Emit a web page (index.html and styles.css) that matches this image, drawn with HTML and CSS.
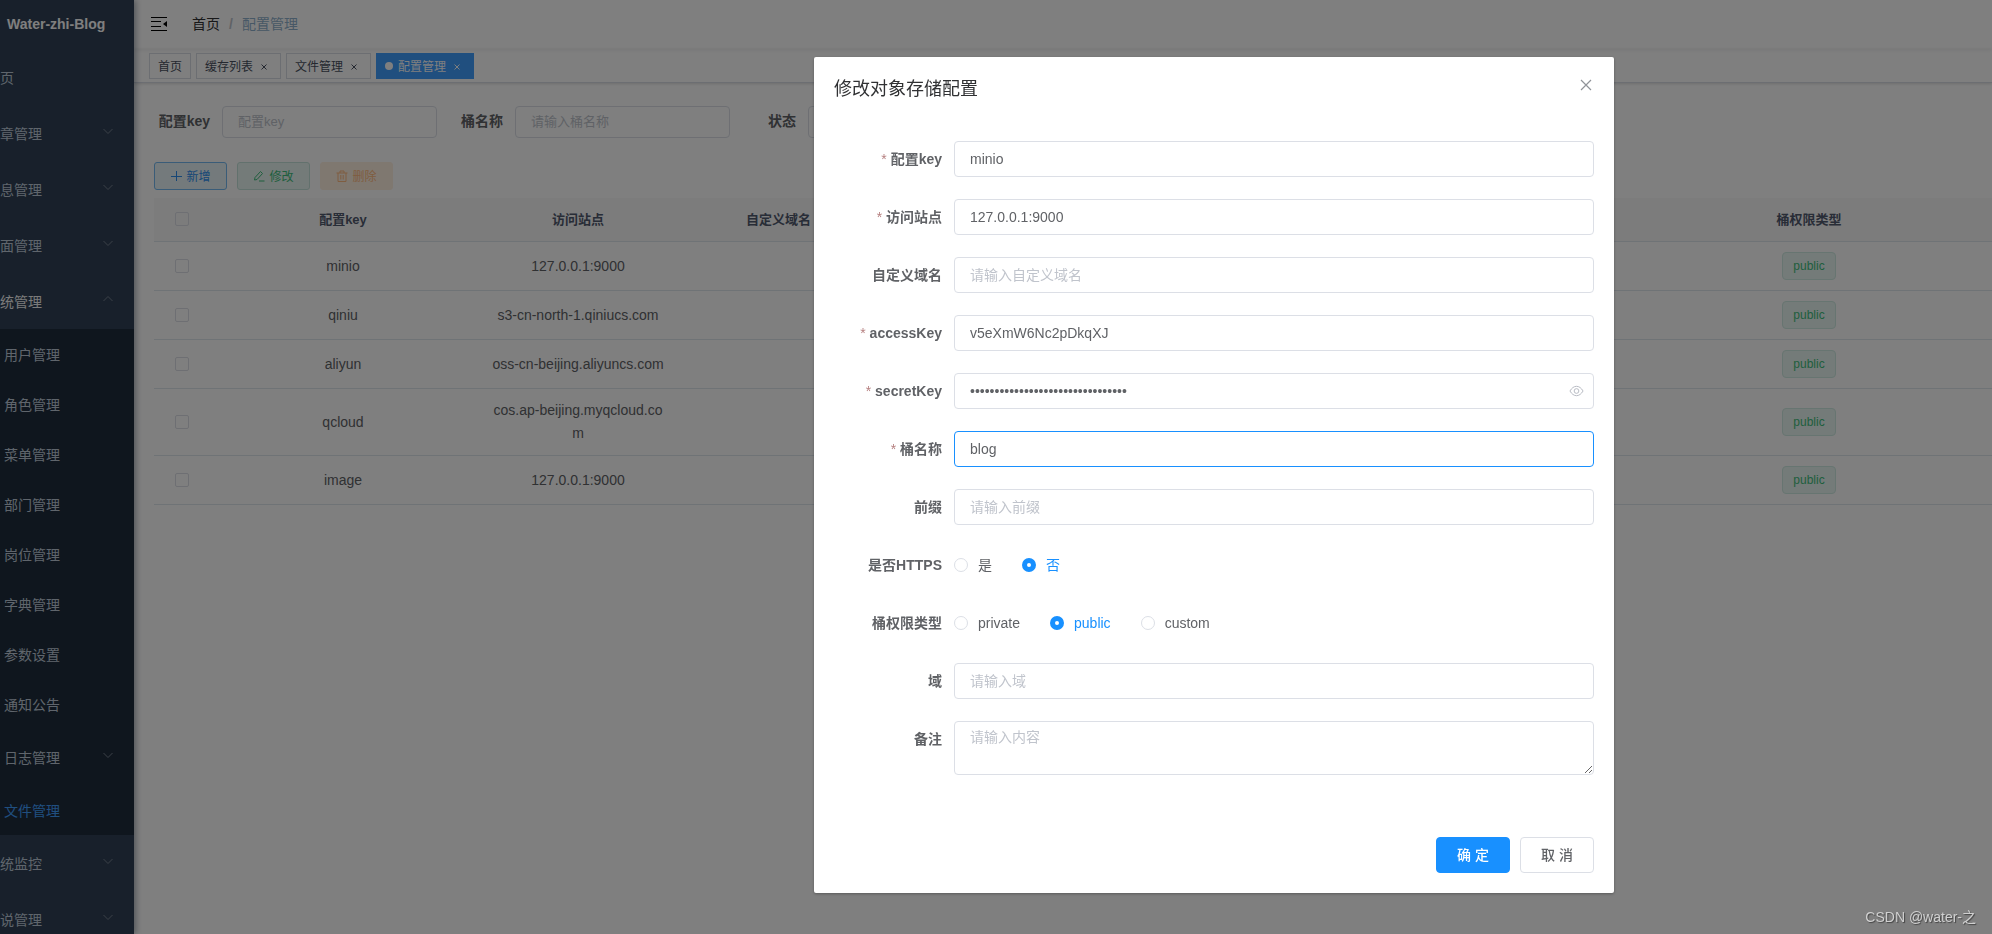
FILE: index.html
```html
<!DOCTYPE html>
<html lang="zh-CN">
<head>
<meta charset="utf-8">
<title>配置管理</title>
<link rel="stylesheet" href="styles.css">
</head>
<body>
<svg class="defs" aria-hidden="true">
  <symbol id="arrow" viewBox="0 0 12 12"><path d="M1.500 4L6 8.500 10.500 4" fill="none" stroke="currentColor"/></symbol>
  <symbol id="close" viewBox="0 0 12 12"><path d="M1 1l10 10M11 1L1 11" fill="none" stroke="currentColor" stroke-width="1.2"/></symbol>
  <symbol id="cross" viewBox="0 0 6 6"><path d="M.5.5l5 5M5.500.5l-5 5" fill="none" stroke="currentColor"/></symbol>
</svg>
<div class="app">
  <aside class="sidebar">
    <h1 class="logo">Water-zhi-Blog</h1>
    <ul class="menu">
      <li class="item">页</li>
      <li class="item">章管理<svg class="chev"><use href="#arrow"/></svg></li>
      <li class="item">息管理<svg class="chev"><use href="#arrow"/></svg></li>
      <li class="item">面管理<svg class="chev"><use href="#arrow"/></svg></li>
      <li class="item open">统管理<svg class="chev up"><use href="#arrow"/></svg></li>
      <li>
        <ul class="submenu">
          <li class="item sub">用户管理</li>
          <li class="item sub">角色管理</li>
          <li class="item sub">菜单管理</li>
          <li class="item sub">部门管理</li>
          <li class="item sub">岗位管理</li>
          <li class="item sub">字典管理</li>
          <li class="item sub">参数设置</li>
          <li class="item sub">通知公告</li>
          <li class="item group">日志管理<svg class="chev"><use href="#arrow"/></svg></li>
          <li class="item sub active">文件管理</li>
        </ul>
      </li>
      <li class="item">统监控<svg class="chev"><use href="#arrow"/></svg></li>
      <li class="item">说管理<svg class="chev"><use href="#arrow"/></svg></li>
    </ul>
  </aside>
  <main class="main">
    <header class="navbar">
      <button class="fold" type="button" aria-label="折叠菜单"><svg viewBox="0 0 16 16" width="16" height="16"><path d="M0 1.500h16M0 5.500h10M0 10.500h10M0 14.500h16" stroke="#000" fill="none"/><path d="M16 5v6l-4-3z"/></svg></button>
      <nav class="crumbs"><a href="#">首页</a><span class="sep">/</span><span class="here">配置管理</span></nav>
    </header>
    <nav class="tags">
      <a class="tag" href="#">首页</a>
      <a class="tag" href="#">缓存列表<svg class="x"><use href="#cross"/></svg></a>
      <a class="tag" href="#">文件管理<svg class="x"><use href="#cross"/></svg></a>
      <a class="tag current" href="#">配置管理<svg class="x"><use href="#cross"/></svg></a>
    </nav>
    <section class="content">
      <form class="filters">
        <div class="filter"><label for="q-key">配置key</label><input id="q-key" placeholder="配置key"></div>
        <div class="filter"><label for="q-bucket">桶名称</label><input id="q-bucket" placeholder="请输入桶名称"></div>
        <div class="filter"><label for="q-status">状态</label><input id="q-status"></div>
      </form>
      <div class="tools">
        <button type="button" class="tool add"><svg viewBox="0 0 12 12"><path d="M6.500 1v10M1 6.500h11"/></svg>新增</button>
        <button type="button" class="tool edit"><svg viewBox="0 0 12 12"><path d="M2 7.500L7.500 1.500l2 2L4 9.500l-2.500.5zM6 11h5.500"/></svg>修改</button>
        <button type="button" class="tool del"><svg viewBox="0 0 12 12"><path d="M.5 3h11M4 3V1h4v2M2 3v8.500h8V3M4.800 5v4.500M7.200 5v4.500"/></svg>删除</button>
      </div>
      <table class="grid">
        <colgroup><col class="c-check"><col class="c-key"><col class="c-site"><col class="c-domain"><col><col class="c-type"><col class="c-end"></colgroup>
        <thead><tr><th><input type="checkbox" aria-label="全选"></th><th>配置key</th><th>访问站点</th><th>自定义域名</th><th></th><th>桶权限类型</th><th></th></tr></thead>
        <tbody>
          <tr><td><input type="checkbox" aria-label="minio"></td><td>minio</td><td>127.0.0.1:9000</td><td></td><td></td><td><span class="badge">public</span></td><td></td></tr>
          <tr><td><input type="checkbox" aria-label="qiniu"></td><td>qiniu</td><td>s3-cn-north-1.qiniucs.com</td><td></td><td></td><td><span class="badge">public</span></td><td></td></tr>
          <tr><td><input type="checkbox" aria-label="aliyun"></td><td>aliyun</td><td>oss-cn-beijing.aliyuncs.com</td><td></td><td></td><td><span class="badge">public</span></td><td></td></tr>
          <tr><td><input type="checkbox" aria-label="qcloud"></td><td>qcloud</td><td>cos.ap-beijing.myqcloud.com</td><td></td><td></td><td><span class="badge">public</span></td><td></td></tr>
          <tr><td><input type="checkbox" aria-label="image"></td><td>image</td><td>127.0.0.1:9000</td><td></td><td></td><td><span class="badge">public</span></td><td></td></tr>
        </tbody>
      </table>
    </section>
  </main>
</div>
<div class="overlay">
  <form class="dialog" role="dialog" aria-labelledby="dlg-title">
    <header class="dialog-head">
      <h2 id="dlg-title">修改对象存储配置</h2>
      <button type="button" class="dismiss" aria-label="关闭"><svg><use href="#close"/></svg></button>
    </header>
    <div class="dialog-body">
      <div class="row"><label class="name req" for="f-key">配置key</label><input class="field" id="f-key" value="minio"></div>
      <div class="row"><label class="name req" for="f-site">访问站点</label><input class="field" id="f-site" value="127.0.0.1:9000"></div>
      <div class="row"><label class="name" for="f-domain">自定义域名</label><input class="field" id="f-domain" placeholder="请输入自定义域名"></div>
      <div class="row"><label class="name req" for="f-access">accessKey</label><input class="field" id="f-access" value="v5eXmW6Nc2pDkqXJ"></div>
      <div class="row"><label class="name req" for="f-secret">secretKey</label><div class="secret"><input class="field" id="f-secret" type="password" value="00000000000000000000000000000000"><svg class="eye" viewBox="0 0 16 12"><path d="M1 6c2-3.300 4.300-5 7-5s5 1.700 7 5c-2 3.300-4.300 5-7 5S3 9.300 1 6z"/><circle cx="8" cy="6" r="2.500"/></svg></div></div>
      <div class="row"><label class="name req" for="f-bucket">桶名称</label><input class="field focus" id="f-bucket" value="blog"></div>
      <div class="row"><label class="name" for="f-prefix">前缀</label><input class="field" id="f-prefix" placeholder="请输入前缀"></div>
      <div class="row" role="radiogroup" aria-labelledby="l-https"><span class="name" id="l-https">是否HTTPS</span>
        <div class="radios"><label><input type="radio" name="https"><span>是</span></label><label><input type="radio" name="https" checked><span>否</span></label></div></div>
      <div class="row" role="radiogroup" aria-labelledby="l-policy"><span class="name" id="l-policy">桶权限类型</span>
        <div class="radios"><label><input type="radio" name="policy"><span>private</span></label><label><input type="radio" name="policy" checked><span>public</span></label><label><input type="radio" name="policy"><span>custom</span></label></div></div>
      <div class="row"><label class="name" for="f-region">域</label><input class="field" id="f-region" placeholder="请输入域"></div>
      <div class="row"><label class="name" for="f-remark">备注</label><textarea class="field area" id="f-remark" placeholder="请输入内容"></textarea></div>
    </div>
    <footer class="dialog-foot">
      <button type="button" class="btn primary">确 定</button>
      <button type="button" class="btn">取 消</button>
    </footer>
  </form>
</div>
<div class="watermark">CSDN @water-之</div>
</body>
</html>
```
FILE: styles.css
```css
* { box-sizing: border-box; }
body {
  margin: 0;
  height: 100vh;
  overflow: hidden;
  font-family: "Liberation Sans", "Noto Sans CJK SC", sans-serif;
  font-size: 14px;
  color: #606266;
}
input, button, textarea { font-family: inherit; margin: 0; }
a { color: inherit; text-decoration: none; }
ul { list-style: none; margin: 0; padding: 0; }
.defs { position: absolute; width: 0; height: 0; }
.app { display: flex; height: 100vh; overflow: hidden; background: #fff; }

.sidebar {
  position: relative;
  z-index: 2;
  flex: 0 0 134px;
  overflow: hidden;
  background: #304156;
  color: #bfcbd9;
  box-shadow: 2px 0 6px rgba(0, 21, 41, .35);
}
.logo {
  margin: 0;
  padding-left: 7px;
  font-size: 14px;
  line-height: 49px;
  color: #fff;
}
.item {
  display: flex;
  align-items: center;
  justify-content: space-between;
  height: 56px;
  padding-right: 20px;
}
.open { color: #f4f4f5; }
.submenu { background: #1f2d3d; }
.submenu .item { padding-left: 4px; }
.submenu .sub { height: 50px; }
.active { color: #409eff; }
.chev { width: 12px; height: 12px; margin-bottom: 4px; color: #76808f; }
.up { transform: rotate(180deg); }

.main { flex: 1; min-width: 0; }
.navbar {
  display: flex;
  align-items: center;
  height: 49px;
  padding: 0 17px 2px;
  box-shadow: 0 1px 4px rgba(0, 21, 41, .08);
}
.fold { display: flex; padding: 0; margin-right: 25px; border: 0; background: none; }
.crumbs { display: flex; align-items: center; line-height: 20px; color: #303133; }
.sep { margin: 0 9px; font-weight: bold; color: #c0c4cc; }
.here { color: #8fb0cc; }
.tags {
  display: flex;
  gap: 5px;
  height: 34px;
  padding: 4px 15px 0;
  border-bottom: 1px solid #d8dce5;
  box-shadow: 0 1px 3px rgba(0, 0, 0, .12), 0 0 3px rgba(0, 0, 0, .04);
}
.tag {
  display: flex;
  align-items: center;
  height: 26px;
  padding: 0 8px 1px;
  border: 1px solid #d8dce5;
  font-size: 12px;
  color: #495060;
}
.current { background: #409eff; border-color: #409eff; color: #fff; }
.current::before {
  content: "";
  width: 8px;
  height: 8px;
  margin-right: 5px;
  border-radius: 50%;
  background: #fff;
}
.x { width: 6px; height: 6px; margin: 2px 5px 0 8px; }

.content { padding: 20px 0 0 20px; }
.filters { display: flex; gap: 10px; padding-top: 3px; }
.filter { display: flex; align-items: center; height: 32px; }
.filter label { width: 68px; padding-right: 12px; text-align: right; font-weight: bold; line-height: 30px; padding-bottom: 2px; }
.filter input {
  width: 215px;
  height: 32px;
  padding: 0 15px 2px;
  border: 1px solid #dcdfe6;
  border-radius: 4px;
  font-size: 13px;
}
::placeholder { color: #c0c4cc; opacity: 1; }
.tools { display: flex; gap: 10px; margin: 24px 0 8px; }
.tool {
  display: flex;
  align-items: center;
  justify-content: center;
  gap: 4px;
  width: 73px;
  height: 28px;
  padding: 0 0 1px;
  border: 1px solid;
  border-radius: 3px;
  font-size: 12px;
}
.tool svg { width: 12px; height: 12px; fill: none; stroke: currentColor; }
.add { color: #2f8fee; background: #e8f4f8; border-color: #74b8f0; }
.edit { color: #3fbe7c; background: #e8f6f2; border-color: #c4e2da; }
.del { color: #ffba80; background: #fff0e0; border-color: #fff0e0; }

.grid { width: 100%; table-layout: fixed; border-collapse: separate; border-spacing: 0; text-align: center; }
.c-check { width: 55px; }
.c-key { width: 268px; }
.c-site { width: 202px; }
.c-domain { width: 199px; }
.c-type { width: 202px; }
.c-end { width: 82px; }
.grid th { height: 44px; padding: 0 10px 2px; background: #f8f8f9; color: #515a6e; font-size: 13px; border-bottom: 1px solid #dfe6ec; }
.grid td { height: 49px; padding: 10px 12px; line-height: 23px; word-break: break-all; border-bottom: 1px solid #dfe6ec; }
.grid input {
  appearance: none;
  display: block;
  width: 14px;
  height: 14px;
  margin: 0 auto;
  border: 1px solid #dcdfe6;
  border-radius: 2px;
}
.badge {
  display: block;
  width: 54px;
  height: 28px;
  margin: 0 auto;
  border: 1px solid #cfeae2;
  border-radius: 4px;
  background: #e8f6f2;
  color: #3fbe7c;
  font-size: 12px;
  line-height: 26px;
}

.overlay {
  position: fixed;
  inset: 0;
  z-index: 10;
  background: rgba(0, 0, 0, .5);
}
.dialog {
  width: 800px;
  margin: 57px 0 0 814px;
  border-radius: 2px;
  background: #fff;
  box-shadow: 0 1px 3px rgba(0, 0, 0, .3);
}
.dialog-head { position: relative; padding: 20px 20px 10px; }
.dialog-head h2 { margin: 0; font-size: 18px; font-weight: normal; line-height: 24px; color: #303133; }
.dismiss { position: absolute; top: 22px; right: 22px; display: flex; padding: 0; border: 0; background: none; color: #909399; }
.dismiss svg { width: 12px; height: 12px; }
.dialog-body { display: flex; flex-direction: column; gap: 22px; padding: 30px 20px 52px; }
.row { display: flex; }
.name { flex: 0 0 120px; padding-right: 12px; text-align: right; font-weight: bold; line-height: 36px; }
.req::before { content: "* "; color: #b57f7f; font-weight: normal; }
.field {
  flex: 1;
  width: 100%;
  height: 36px;
  padding: 0 15px;
  border: 1px solid #dcdfe6;
  border-radius: 4px;
  background: #fff;
  color: #606266;
  font-size: 14px;
}
.focus { border-color: #1890ff; }
.area { height: 54px; padding: 5px 15px; line-height: 21px; resize: vertical; }
.secret { position: relative; flex: 1; }
.secret .field { display: block; }
.eye { position: absolute; right: 10px; top: 12px; width: 15px; height: 12px; fill: none; stroke: #b4b8c0; }
.radios { display: flex; align-items: center; gap: 30px; height: 36px; }
.radios label { display: flex; align-items: center; gap: 10px; line-height: 20px; }
.radios input { appearance: none; width: 14px; height: 14px; border: 1px solid #dcdfe6; border-radius: 50%; background: #fff; }
.radios input:checked { border: 5px solid #1890ff; }
.radios input:checked + span { color: #1890ff; }
.dialog-foot { display: flex; justify-content: flex-end; gap: 10px; padding: 10px 20px 20px; }
.btn {
  width: 74px;
  height: 36px;
  padding: 0 0 2px;
  border: 1px solid #dcdfe6;
  border-radius: 4px;
  background: #fff;
  color: #606266;
  font-size: 14px;
  font-weight: 500;
}
.primary { border-color: #1890ff; background: #1890ff; color: #fff; }
.watermark {
  position: fixed;
  right: 16px;
  bottom: 8px;
  z-index: 11;
  color: #d0d0d0;
  text-shadow: 1px 1px 1px #444;
}
```
